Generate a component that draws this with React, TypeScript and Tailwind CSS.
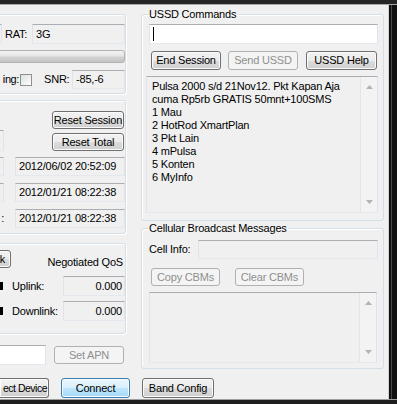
import React from 'react';

type Kind = 'normal' | 'disabled' | 'default';

const Btn: React.FC<{ label: string; className?: string; kind?: Kind }> = ({ label, className = '', kind = 'normal' }) => {
  const look =
    kind === 'disabled'
      ? 'border-[#adb2b5] bg-[#f4f4f4] text-[#8f8f8f]'
      : kind === 'default'
        ? 'border-[#3c7fb1] bg-[linear-gradient(#eaf6fd,#d9f0fc_50%,#bee6fd_50%,#a7d9f5)] shadow-[inset_0_0_0_1px_#f4fbff]'
        : 'border-[#707070] bg-[linear-gradient(#f2f2f2,#ebebeb_50%,#dddddd_50%,#cfcfcf)] shadow-[inset_0_0_0_1px_#fbfbfb]';
  return (
    <button
      type="button"
      className={`flex shrink-0 items-center justify-center whitespace-nowrap rounded-[3px] border leading-none ${look} ${className}`}
    >
      {label}
    </button>
  );
};

const Field: React.FC<{ value?: string; className?: string; white?: boolean; right?: boolean }> = ({
  value = '',
  className = '',
  white = false,
  right = false,
}) => (
  <div
    className={`flex shrink-0 items-center whitespace-nowrap border border-t-[#abadb3] border-x-[#e2e3ea] border-b-[#e3e9ef] ${
      white ? 'bg-white' : 'bg-[#f0f0f0]'
    } ${right ? 'justify-end pr-[2px]' : 'pl-[3px]'} ${className}`}
  >
    {value}
  </div>
);

const Group: React.FC<{ className?: string; children?: React.ReactNode }> = ({ className = '', children }) => (
  <div
    className={`flex flex-col rounded-[3px] border border-[#d5dfe5] shadow-[inset_1px_1px_0_#fff,1px_1px_0_#fff] ${className}`}
  >
    {children}
  </div>
);

const Arrow: React.FC<{ down?: boolean }> = ({ down }) => (
  <svg width="7" height="4" viewBox="0 0 7 4">
    <polygon points={down ? '0,0 7,0 3.5,4' : '0,4 7,4 3.5,0'} fill="#b3b3b3" />
  </svg>
);

const Memo: React.FC<{ lines: string[]; className?: string }> = ({ lines, className = '' }) => (
  <div
    className={`flex border border-t-[#abadb3] border-x-[#e2e3ea] border-b-[#e3e9ef] bg-[#f0f0f0] ${className}`}
  >
    <div className="flex-1 overflow-hidden whitespace-nowrap pl-[5px] pt-[3px] leading-[13px]">
      {lines.map((l, i) => (
        <div key={i}>{l}</div>
      ))}
    </div>
    <div className="flex w-[17px] shrink-0 flex-col items-center justify-between border-l border-[#e4e4e4] bg-[#f3f3f3] py-[8px]">
      <Arrow />
      <Arrow down />
    </div>
  </div>
);

const ussdLines = [
  'Pulsa 2000 s/d 21Nov12. Pkt Kapan Aja',
  'cuma Rp5rb GRATIS 50mnt+100SMS',
  '1 Mau',
  '2 HotRod XmartPlan',
  '3 Pkt Lain',
  '4 mPulsa',
  '5 Konten',
  '6 MyInfo',
];

// the window is scrolled: only the right end of the left column shows
const LeftColumn: React.FC = () => (
  <div className="-ml-[60px] flex w-[186px] shrink-0 flex-col">
    <Group className="mt-[9px] h-[80px]">
      <div className="mt-[9px] flex h-[20px] items-center justify-end">
        <Field className="h-full w-[40px]" />
        <span className="ml-[3px] w-[27px]">RAT:</span>
        <Field value="3G" className="h-full w-[93px]" />
      </div>
      <div className="mt-[6px] h-[13px] rounded-[3px] border border-[#b2b2b2] bg-[linear-gradient(#f4f4f4,#e6e6e6_45%,#d2d2d2_55%,#c4c4c4)]" />
      <div className="mt-[7px] flex h-[19px] items-center justify-end">
        <span className="tracking-[-0.4px]">ing:</span>
        <div className="ml-[1px] h-[12px] w-[12px] border border-[#8e8f8f] bg-[linear-gradient(135deg,#dedede,#ffffff)]" />
        <span className="ml-[12px] w-[28px]">SNR:</span>
        <Field value="-85,-6" className="h-full w-[53px]" />
      </div>
    </Group>

    <Group className="mt-[6px] h-[134px]">
      <div className="mt-[10px] flex h-[18px] justify-end pr-[1px]">
        <Btn label="Reset Session" className="w-[72px]" />
      </div>
      <div className="mt-[1px] flex h-[21px] items-end justify-end pr-[1px]">
        <Field className="h-full w-[50px]" />
        <Btn label="Reset Total" className="ml-[48px] h-[18px] w-[72px]" />
      </div>
      <div className="mt-[6px] flex flex-col gap-[7px]">
        <div className="flex h-[19px] items-center justify-end">
          <Field className="h-full w-[50px]" />
          <Field value="2012/06/02 20:52:09" className="ml-[11px] h-full w-[110px]" />
        </div>
        <div className="flex h-[19px] items-center justify-end">
          <Field className="h-full w-[50px]" />
          <Field value="2012/01/21 08:22:38" className="ml-[11px] h-full w-[110px]" />
        </div>
        <div className="flex h-[19px] items-center justify-end">
          <span>:</span>
          <Field value="2012/01/21 08:22:38" className="ml-[11px] h-full w-[110px]" />
        </div>
      </div>
    </Group>

    <Group className="mt-[9px] h-[91px]">
      <div className="mt-[6px] flex h-[19px] justify-end">
        <button
          type="button"
          className="flex h-[18px] w-[40px] shrink-0 items-center justify-end rounded-[3px] border border-[#707070] bg-[linear-gradient(#f2f2f2,#ebebeb_50%,#dddddd_50%,#cfcfcf)] pr-[5px] leading-none shadow-[inset_0_0_0_1px_#fbfbfb]"
        >
          k
        </button>
        <div className="flex w-[114px] items-end justify-end pr-[2px] leading-[13px]">Negotiated QoS</div>
      </div>
      <div className="mt-[7px] flex h-[20px] items-center justify-end">
        <div className="h-[8px] w-[10px] bg-black" />
        <span className="ml-[9px] w-[51px]">Uplink:</span>
        <Field value="0.000" right className="h-full w-[62px]" />
      </div>
      <div className="mt-[5px] flex h-[20px] items-center justify-end">
        <div className="h-[8px] w-[10px] bg-black" />
        <span className="ml-[9px] w-[51px]">Downlink:</span>
        <Field value="0.000" right className="h-full w-[62px]" />
      </div>
    </Group>

    <div className="mt-[11px] flex h-[20px] items-center justify-end pr-[2px]">
      <Field white className="h-full w-[80px]" />
      <Btn label="Set APN" kind="disabled" className="ml-[8px] h-[18px] w-[70px]" />
    </div>
  </div>
);

const RightColumn: React.FC = () => (
  <div className="ml-[15px] flex w-[243px] shrink-0 flex-col">
    <fieldset className="mt-[3px] w-full min-w-0 rounded-[3px] border border-[#d5dfe5] pb-[7px] shadow-[inset_1px_1px_0_#fff]">
      <legend className="ml-[6px] px-[1px] leading-[13px]">USSD Commands</legend>
      <div className="flex flex-col">
        <div className="ml-[7px] mt-[3px] flex h-[20px] w-[229px] items-center border border-t-[#abadb3] border-x-[#e2e3ea] border-b-[#e3e9ef] bg-white pl-[3px]">
          <div className="h-[14px] w-px bg-black" />
        </div>
        <div className="ml-[9px] mt-[7px] flex h-[19px]">
          <Btn label="End Session" className="w-[70px]" />
          <Btn label="Send USSD" kind="disabled" className="ml-[7px] w-[70px]" />
          <Btn label="USSD Help" className="ml-[8px] w-[71px]" />
        </div>
        <Memo lines={ussdLines} className="ml-[4px] mt-[6px] h-[137px] w-[232px]" />
      </div>
    </fieldset>

    <fieldset className="mt-[1px] w-full min-w-0 rounded-[3px] border border-[#d5dfe5] pb-[5px] shadow-[inset_1px_1px_0_#fff]">
      <legend className="ml-[6px] px-[1px] leading-[13px]">Cellular Broadcast Messages</legend>
      <div className="flex flex-col">
        <div className="mt-[5px] flex h-[19px] items-center justify-between pl-[7px] pr-[5px]">
          <span>Cell Info:</span>
          <Field className="h-full w-[180px]" />
        </div>
        <div className="ml-[9px] mt-[9px] flex h-[18px]">
          <Btn label="Copy CBMs" kind="disabled" className="w-[69px]" />
          <Btn label="Clear CBMs" kind="disabled" className="ml-[15px] w-[69px]" />
        </div>
        <Memo lines={[]} className="ml-[7px] mt-[6px] h-[71px] w-[228px]" />
      </div>
    </fieldset>
  </div>
);

export default function App() {
  return (
    <div className="flex h-[404px] w-[397px] flex-col overflow-hidden bg-[#f0f0f0] font-['Liberation_Sans',Arial,sans-serif] text-[11px] leading-[13px] tracking-[-0.2px] text-black">
      <div className="h-[5px] shrink-0 border-b border-[#a9a9a9] bg-[#262626]" />
      <div className="flex h-[394px] shrink-0">
        <div className="flex w-[388px] shrink-0 flex-col overflow-hidden">
          <div className="flex h-[367px] shrink-0">
            <LeftColumn />
            <RightColumn />
          </div>
          <div className="mt-[6px] flex h-[20px]">
            <button
              type="button"
              className="flex w-[49px] shrink-0 items-center justify-end whitespace-nowrap rounded-r-[3px] border border-l-0 border-[#707070] bg-[linear-gradient(#f2f2f2,#ebebeb_50%,#dddddd_50%,#cfcfcf)] pr-[1px] text-[10.5px] leading-none tracking-[-0.5px] shadow-[inset_0_0_0_1px_#fbfbfb]"
            >
              ect Device
            </button>
            <Btn label="Connect" kind="default" className="ml-[12px] w-[69px]" />
            <Btn label="Band Config" className="ml-[12px] w-[72px]" />
          </div>
        </div>
        <div className="flex w-[9px] shrink-0 border-l border-[#d0d0d0] bg-[#111111]">
          <div className="ml-[2px] w-px bg-[#4a4a4a]" />
        </div>
      </div>
      <div className="flex-1 border-t border-[#9e9e9e] bg-[#1e1e1e]" />
    </div>
  );
}
